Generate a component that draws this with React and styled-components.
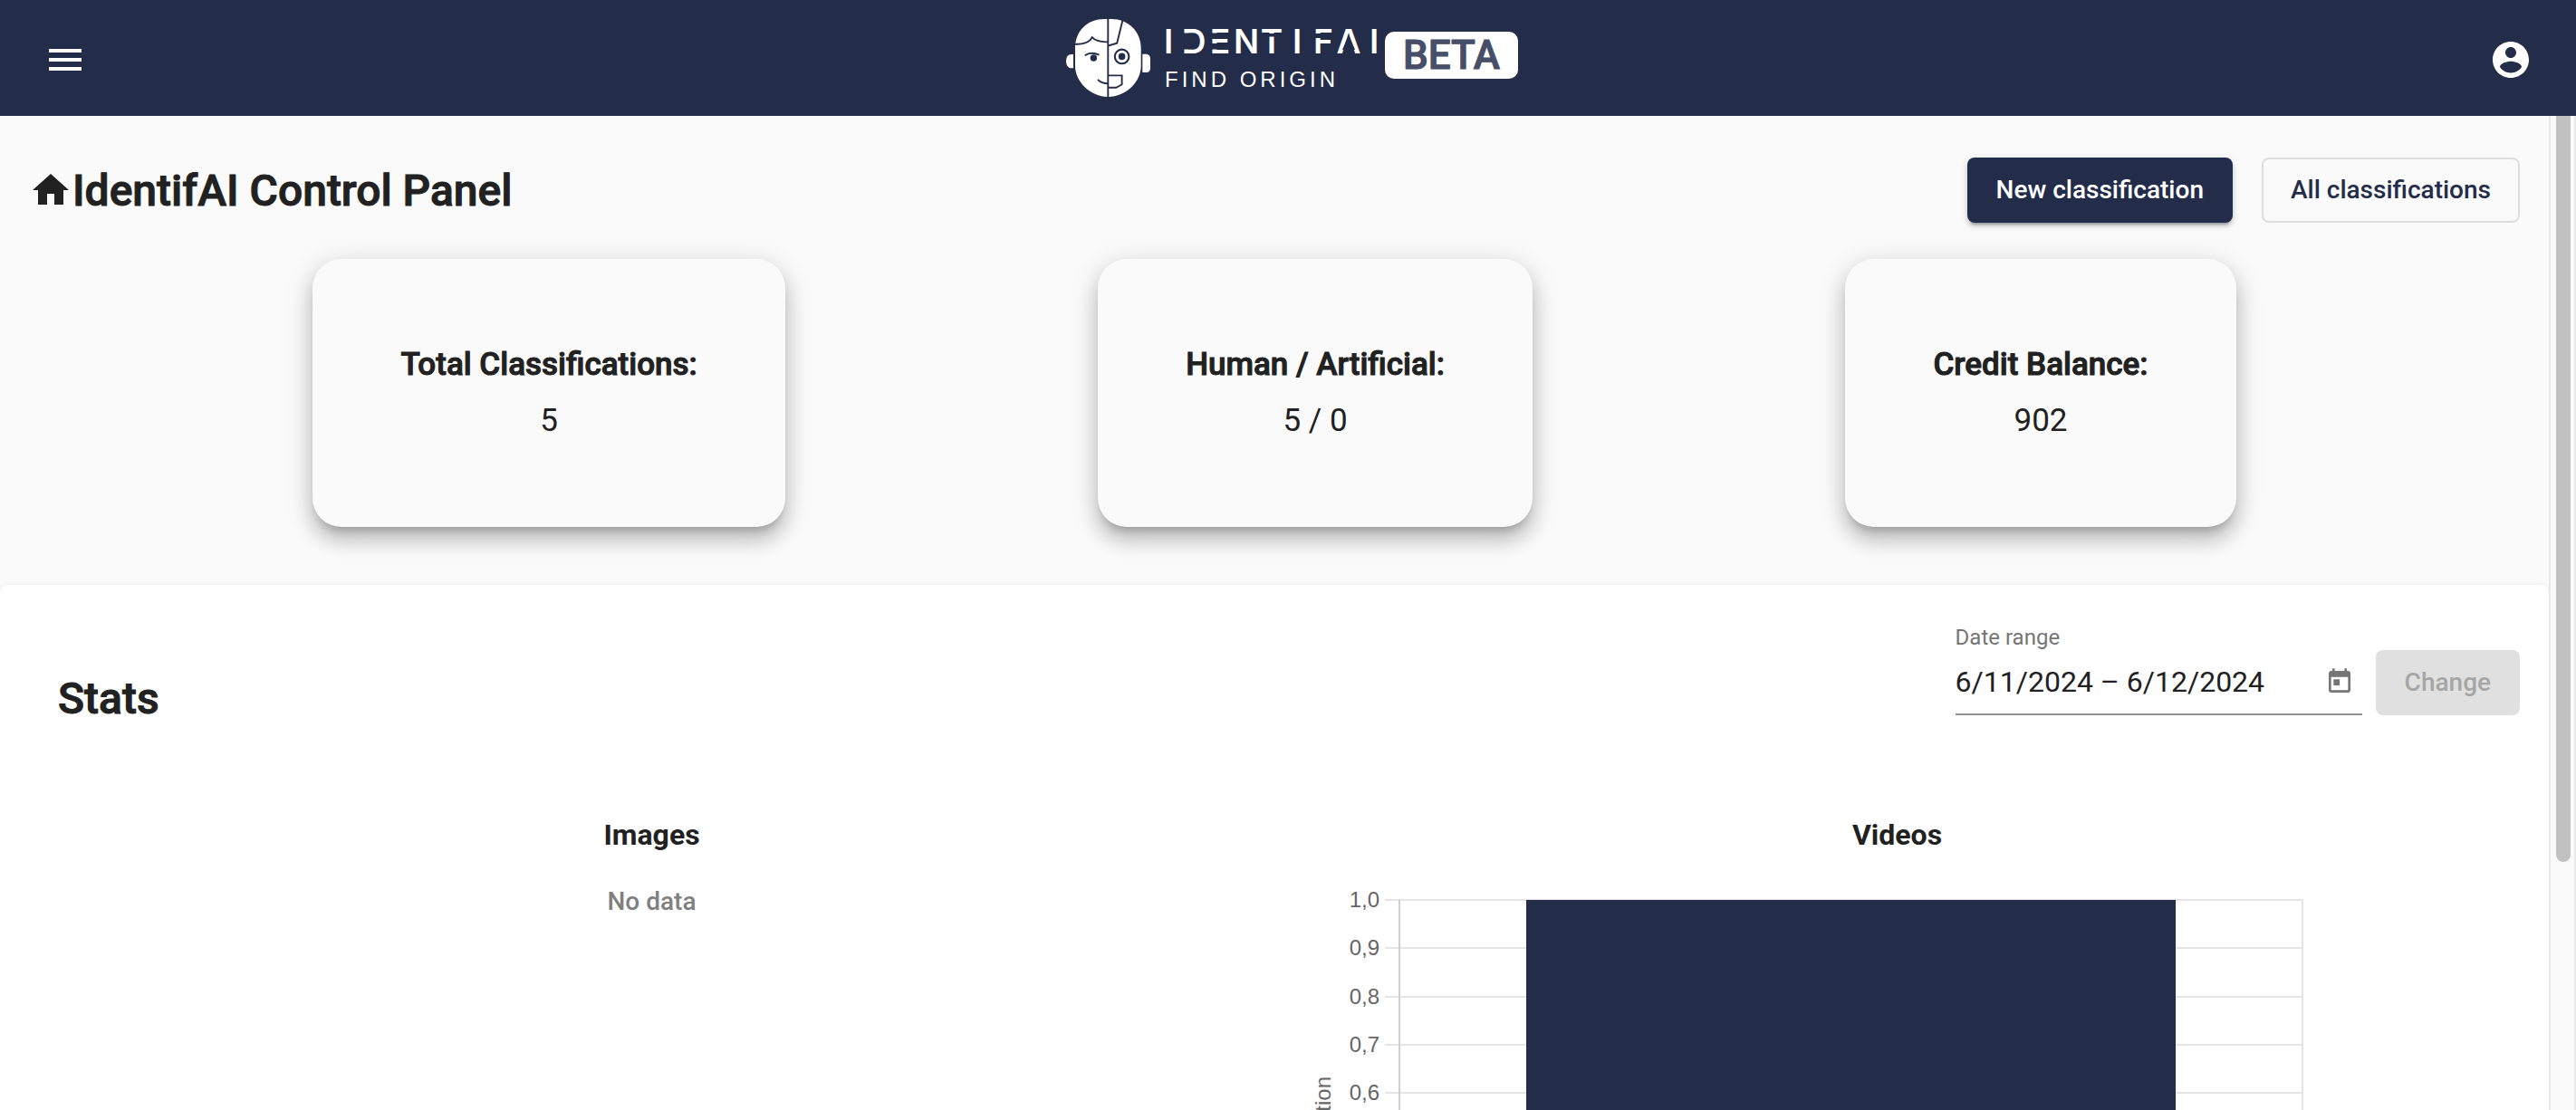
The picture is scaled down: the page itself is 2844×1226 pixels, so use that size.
import React from "react";
import styled, { createGlobalStyle } from "styled-components";

const NAVY = "#232c49";
const INK = "#212121";

const GlobalStyle = createGlobalStyle`
  *, *::before, *::after { box-sizing: border-box; }
  body { margin: 0; background: #fafafa; color: ${INK}; font-family: Roboto, "Liberation Sans", sans-serif; }
  h1, h2, h3, p, dl, dt, dd { margin: 0; }
  button, input { font-family: inherit; }
  h1, h2, dt { font-weight: 500; -webkit-text-stroke: 1px currentColor; }
`;

const Shell = styled.div`
  display: flex;
  flex-direction: column;
  height: 100vh;
  overflow: hidden;
`;

const TopBar = styled.header`
  display: grid;
  grid-template-columns: 1fr auto 1fr;
  align-items: center;
  flex: none;
  height: 128px;
  padding: 4px 48px 0;
  background: ${NAVY};
`;

const IconButton = styled.button`
  display: flex;
  justify-self: ${(p) => p.$align || "start"};
  padding: 0;
  border: 0;
  background: none;
  color: ${(p) => p.$color || "#fff"};
  cursor: pointer;
`;

const Icon = styled.svg`
  display: block;
  flex: none;
  width: ${(p) => p.$size}px;
  height: ${(p) => p.$size}px;
  fill: currentColor;
`;

const Brand = styled.div`
  display: flex;
  align-items: center;
`;

const BetaBadge = styled.span`
  margin-bottom: 10px;
  padding: 0 20px;
  border-radius: 10px;
  background: #fff;
  color: #464e68;
  font-size: 44px;
  font-weight: 500;
  line-height: 52px;
  -webkit-text-stroke: 1px currentColor;
`;

const Viewport = styled.div`
  display: flex;
  flex: 1;
  min-height: 0;
`;

const Content = styled.main`
  flex: 1;
  min-width: 0;
  overflow: hidden auto;
  scrollbar-width: none;
`;

const ScrollTrack = styled.div`
  flex: none;
  width: 30px;
  padding: 0 4px 0 6px;
  border: solid #e8e8e8;
  border-width: 0 2px;
`;

const ScrollThumb = styled.div`
  height: 75%;
  border-radius: 0 0 8px 8px;
  background: #c1c1c1;
`;

const PageHead = styled.div`
  display: flex;
  align-items: center;
  justify-content: space-between;
  padding: 46px 32px 40px;
`;

const PageTitle = styled.h1`
  display: flex;
  align-items: center;
  padding-top: 2px;
  font-size: 48px;
  line-height: 56px;
`;

const HomeIcon = styled(Icon)`
  margin-bottom: 2px;
`;

const Actions = styled.div`
  display: flex;
  gap: 32px;
`;

const Button = styled.button`
  height: 72px;
  padding: 0 30px 2px;
  border: 2px solid ${(p) => (p.$kind === "outline" ? "#dedede" : "transparent")};
  border-radius: 8px;
  background: ${(p) => (p.$kind === "outline" ? "transparent" : NAVY)};
  color: ${(p) => (p.$kind === "outline" ? NAVY : "#fff")};
  box-shadow: ${(p) =>
    p.$kind === "raised"
      ? "0 6px 2px -4px rgba(0,0,0,.2), 0 4px 4px rgba(0,0,0,.14), 0 2px 10px rgba(0,0,0,.12)"
      : "none"};
  font-size: 28px;
  font-weight: 500;
  white-space: nowrap;
  cursor: pointer;

  &:disabled {
    background: #e0e0e0;
    color: #a6a6a6;
    cursor: default;
  }
`;

const Cards = styled.dl`
  display: flex;
  justify-content: space-evenly;
  padding-bottom: 64px;
`;

const Card = styled.div`
  padding: 86px 97px;
  border-radius: 32px;
  background: #fafafa;
  box-shadow: 0 10px 10px -6px rgba(0, 0, 0, 0.2), 0 16px 20px 2px rgba(0, 0, 0, 0.14),
    0 6px 28px 4px rgba(0, 0, 0, 0.12);
  font-size: 35px;
  line-height: 62px;
  text-align: center;
`;

const Panel = styled.section`
  padding: 44px 32px;
  border-radius: 8px;
  background: #fff;
  box-shadow: 0 4px 2px -2px rgba(0, 0, 0, 0.2), 0 2px 2px rgba(0, 0, 0, 0.14),
    0 2px 6px rgba(0, 0, 0, 0.12);
`;

const PanelHead = styled.div`
  display: flex;
  align-items: flex-end;
  justify-content: space-between;
  padding-left: 32px;
`;

const PanelTitle = styled.h2`
  font-size: 48px;
  line-height: 36px;
`;

const Filter = styled.form`
  display: flex;
  align-items: flex-end;
  gap: 15px;
`;

const Field = styled.div`
  width: 449px;
`;

const FieldLabel = styled.label`
  display: block;
  color: #757575;
  font-size: 24px;
  line-height: 28px;
`;

const FieldControl = styled.div`
  display: flex;
  align-items: center;
  height: 72px;
  padding-right: 9px;
  border-bottom: 2px solid #949494;
`;

const FieldInput = styled.input`
  flex: 1;
  min-width: 0;
  padding: 0;
  border: 0;
  outline: 0;
  background: none;
  color: ${INK};
  font-size: 32px;
  line-height: 40px;
`;

const Charts = styled.div`
  display: grid;
  grid-template-columns: 1fr 1fr;
  margin-top: 112px;
`;

const ChartColumn = styled.section`
  display: flex;
  flex-direction: column;
  gap: 38px;
  text-align: center;
`;

const ChartTitle = styled.h3`
  font-size: 32px;
  font-weight: 700;
  line-height: 40px;
`;

const Empty = styled.p`
  color: #808080;
  font-size: 28px;
  font-weight: 500;
  line-height: 32px;
`;

const ChartSvg = styled.svg`
  display: block;
  width: 1116px;
  max-width: 100%;
  margin-left: 32px;
  font-family: "Liberation Sans", Arial, sans-serif;
  font-size: 24px;
  fill: #666;
`;

const LogoSvg = styled.svg`
  display: block;
  width: 361px;
  height: 92px;
`;

const letters = [
  ["I", 114],
  ["D", 142],
  ["E", 171],
  ["N", 200],
  ["T", 228],
  ["I", 256],
  ["F", 285],
  ["A", 313],
  ["I", 341],
];

function Logo() {
  return (
    <LogoSvg viewBox="-8 0 361 92" role="img" aria-label="IdentifAI Find Origin">
      <g fill="#fff">
        <path d="M11 31C12 14 24 1 44 1H51C69 1 83.7 14 83.7 34V53C83.7 70 67 87 47.3 87C28 87 11 70 11 53Z" />
        <path d="M9 40H7C3 40 1 43 1 47.5S3 55.3 7 55.3H9Z" />
        <path d="M85.3 39.7H89C92.5 39.7 94 42 94 45V55C94 58 92.5 60 89 60H85.3Z" />
      </g>
      <g fill="none" stroke={NAVY} strokeWidth="1.9">
        <path d="M47.3 0V88" />
        <path d="M10 28.6C19 29.6 27 27 29.7 21.2C34 26 40 26.6 47 26.3" />
        <path d="M63.5 2L57.2 27.7L47.5 30.5" />
        <path d="M21.7 41.3C26 38.2 32 38.2 37.5 40.6" />
        <path d="M36 67.8C39 71 43 72.2 47.3 72.2" />
        <path d="M47.5 63.4H62.6V73.3L56.3 76.8H47.5" />
        <circle cx="62.6" cy="42.4" r="7.8" strokeWidth="2.1" />
      </g>
      <circle cx="31.4" cy="44" r="3.7" fill={NAVY} />
      <circle cx="62.6" cy="42.4" r="3.8" fill={NAVY} />
      <g fill="#fff" fontFamily="Inter, sans-serif" fontSize="37" fontWeight="600" textAnchor="middle">
        {letters.map(([ch, x]) => (
          <text key={x} x={x} y="39">
            {ch}
          </text>
        ))}
      </g>
      <g fill={NAVY}>
        <rect x="127" y="16.500" width="10" height="18" />
        <rect x="158" y="16.500" width="10" height="6.500" />
        <rect x="158" y="28" width="10" height="6.500" />
        <rect x="222" y="17" width="13" height="3.500" />
        <rect x="272" y="17" width="24" height="5" />
        <path d="M306 35L313 18L320 35Z" />
      </g>
      <text x="110" y="76" fill="#fff" fontFamily="Liberation Sans, Arial, sans-serif" fontSize="24" letterSpacing="4">
        FIND ORIGIN
      </text>
    </LogoSvg>
  );
}

const ticks = ["1,0", "0,9", "0,8", "0,7", "0,6", "0,5", "0,4", "0,3", "0,2", "0,1", "0,0"];
const tickY = (i) => 14 + Math.round(i * 53.3);

function VideosChart() {
  const bottom = tickY(ticks.length - 1);
  return (
    <ChartSvg viewBox="0 0 1116 580" role="img" aria-label="Videos by classification">
      {ticks.map((label, i) => (
        <g key={label}>
          <rect x="90" y={tickY(i) - 1} width="1014" height="2" fill="#e5e5e5" />
          <text x="84" y={tickY(i) + 8} textAnchor="end">
            {label}
          </text>
        </g>
      ))}
      <rect x="1102" y="14" width="2" height={bottom - 14} fill="#e5e5e5" />
      <rect x="105" y="14" width="2" height={bottom - 14} fill="#d0d0d0" />
      <rect x="246" y="14" width="717" height={bottom - 14} fill={NAVY} />
      <text transform="translate(30 209) rotate(-90)" textAnchor="end">
        classification
      </text>
    </ChartSvg>
  );
}

const totals = [
  ["Total Classifications:", "5"],
  ["Human / Artificial:", "5 / 0"],
  ["Credit Balance:", "902"],
];

export default function App() {
  return (
    <Shell>
      <GlobalStyle />
      <TopBar>
        <IconButton type="button" aria-label="Menu">
          <Icon $size={48} viewBox="0 0 24 24">
            <path d="M3 18h18v-2H3v2zm0-5h18v-2H3v2zm0-7v2h18V6H3z" />
          </Icon>
        </IconButton>
        <Brand>
          <Logo />
          <BetaBadge>BETA</BetaBadge>
        </Brand>
        <IconButton type="button" aria-label="Account" $align="end">
          <Icon $size={48} viewBox="0 0 24 24">
            <path d="M12 2C6.48 2 2 6.48 2 12s4.48 10 10 10 10-4.48 10-10S17.52 2 12 2zm0 3c1.66 0 3 1.34 3 3s-1.34 3-3 3-3-1.34-3-3 1.34-3 3-3zm0 14.2c-2.5 0-4.71-1.28-6-3.22.03-1.99 4-3.08 6-3.08 1.99 0 5.97 1.09 6 3.08-1.29 1.94-3.5 3.22-6 3.22z" />
          </Icon>
        </IconButton>
      </TopBar>
      <Viewport>
        <Content>
          <PageHead>
            <PageTitle>
              <HomeIcon $size={48} viewBox="0 0 24 24" aria-hidden="true">
                <path d="M10 20v-6h4v6h5v-8h3L12 3 2 12h3v8z" />
              </HomeIcon>
              IdentifAI Control Panel
            </PageTitle>
            <Actions>
              <Button type="button" $kind="raised">
                New classification
              </Button>
              <Button type="button" $kind="outline">
                All classifications
              </Button>
            </Actions>
          </PageHead>
          <Cards>
            {totals.map(([label, value]) => (
              <Card key={label}>
                <dt>{label}</dt>
                <dd>{value}</dd>
              </Card>
            ))}
          </Cards>
          <Panel>
            <PanelHead>
              <PanelTitle>Stats</PanelTitle>
              <Filter onSubmit={(e) => e.preventDefault()}>
                <Field>
                  <FieldLabel htmlFor="range">Date range</FieldLabel>
                  <FieldControl>
                    <FieldInput id="range" type="text" defaultValue="6/11/2024 – 6/12/2024" />
                    <IconButton type="button" aria-label="Open calendar" $color="#757575">
                      <Icon $size={32} viewBox="0 0 24 24">
                        <path d="M19 3h-1V1h-2v2H8V1H6v2H5c-1.11 0-1.99.9-1.99 2L3 19c0 1.1.89 2 2 2h14c1.1 0 2-.9 2-2V5c0-1.1-.9-2-2-2zm0 16H5V8h14v11zM7 10h5v5H7z" />
                      </Icon>
                    </IconButton>
                  </FieldControl>
                </Field>
                <Button type="submit" disabled>
                  Change
                </Button>
              </Filter>
            </PanelHead>
            <Charts>
              <ChartColumn>
                <ChartTitle>Images</ChartTitle>
                <Empty>No data</Empty>
              </ChartColumn>
              <ChartColumn>
                <ChartTitle>Videos</ChartTitle>
                <VideosChart />
              </ChartColumn>
            </Charts>
          </Panel>
        </Content>
        <ScrollTrack>
          <ScrollThumb />
        </ScrollTrack>
      </Viewport>
    </Shell>
  );
}
